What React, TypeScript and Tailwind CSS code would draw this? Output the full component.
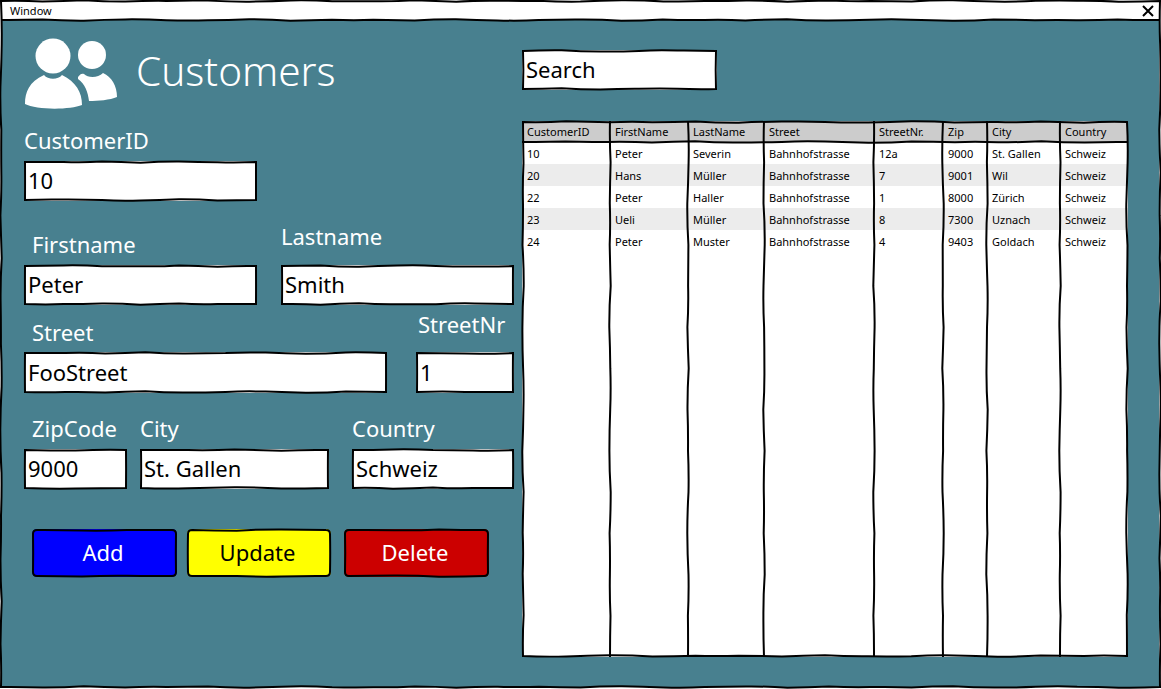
import type { ReactNode } from "react";

const FONT = "font-['Noto_Sans','Open_Sans',sans-serif]";

// hand-drawn look: a line with small seeded bumps along it
function wobbleLine(x1: number, y1: number, x2: number, y2: number, seed: number): string {
  const len = Math.hypot(x2 - x1, y2 - y1);
  const steps = Math.max(1, Math.round(len / 42));
  const nx = (y2 - y1) / (len || 1);
  const ny = (x2 - x1) / (len || 1);
  let d = "";
  let prevX = x1;
  let prevY = y1;
  for (let i = 1; i <= steps; i++) {
    const t = i / steps;
    const off = i === steps ? 0 : Math.sin(seed * 7.3 + i * 2.4) * 0.7;
    const x = x1 + (x2 - x1) * t + nx * off;
    const y = y1 + (y2 - y1) * t - ny * off;
    const bend = Math.sin(seed * 3.1 + i * 1.7) * 0.8;
    const cx = (prevX + x) / 2 + nx * bend;
    const cy = (prevY + y) / 2 - ny * bend;
    d += ` Q${cx.toFixed(1)} ${cy.toFixed(1)} ${x.toFixed(1)} ${y.toFixed(1)}`;
    prevX = x;
    prevY = y;
  }
  return d;
}

function wobbleRect(w: number, h: number, r: number, seed: number): string {
  const a = 1;
  const b = w - 1;
  const c = h - 1;
  return (
    `M${a + r} ${a}` +
    wobbleLine(a + r, a, b - r, a, seed) +
    (r ? ` Q${b} ${a} ${b} ${a + r}` : "") +
    wobbleLine(b, a + r, b, c - r, seed + 1) +
    (r ? ` Q${b} ${c} ${b - r} ${c}` : "") +
    wobbleLine(b - r, c, a + r, c, seed + 2) +
    (r ? ` Q${a} ${c} ${a} ${c - r}` : "") +
    wobbleLine(a, c - r, a, a + r, seed + 3) +
    (r ? ` Q${a} ${a} ${a + r} ${a}` : "") +
    " Z"
  );
}

function Outline({ w, h, r = 0, seed, children }: { w: number; h: number; r?: number; seed: number; children?: ReactNode }) {
  return (
    <svg
      className="pointer-events-none absolute inset-0 overflow-visible"
      width={w}
      height={h}
      viewBox={`0 0 ${w} ${h}`}
      fill="none"
      stroke="#000"
      strokeWidth="2"
    >
      <path d={wobbleRect(w, h, r, seed)} />
      {children}
    </svg>
  );
}

function InputBox({ value, w, h = 40, seed }: { value: string; w: number; h?: number; seed: number }) {
  return (
    <div
      className="relative flex items-center bg-white pb-[2px] pl-1 text-[22px] leading-none text-black"
      style={{ width: w, height: h }}
    >
      {value}
      <Outline w={w} h={h} seed={seed} />
    </div>
  );
}

function Field({
  label,
  value,
  w,
  h,
  seed,
  labelClass,
}: {
  label: string;
  value: string;
  w: number;
  h?: number;
  seed: number;
  labelClass: string;
}) {
  return (
    <div className="shrink-0" style={{ width: w }}>
      <div className={`h-6 whitespace-nowrap text-[22px] leading-[22px] text-white ${labelClass}`}>{label}</div>
      <InputBox value={value} w={w} h={h} seed={seed} />
    </div>
  );
}

function ActionButton({ label, w, bg, fg, seed }: { label: string; w: number; bg: string; fg: string; seed: number }) {
  return (
    <div
      className={`relative flex h-[48px] items-center justify-center rounded-[5px] pb-[2px] pr-[3px] text-[22px] ${bg} ${fg}`}
      style={{ width: w }}
    >
      {label}
      <Outline w={w} h={48} r={4} seed={seed} />
    </div>
  );
}

function CustomersIcon() {
  return (
    <svg className="ml-px" width="92" height="71" viewBox="25 38 92 71" fill="#fff">
      <circle cx="53" cy="56" r="17.5" />
      <circle cx="92" cy="55" r="14" />
      <path d="M25 104C25 92 29 82 44 75C48 80 58 80 62 75C76 82 82 92 82 105C70 110 36 110 25 104Z" />
      <path d="M78 77C80 74 82 73 84 74C88 78 98 78 103 73C112 77 117 86 117 97C110 100 98 101 89 101C88 92 85 84 78 79Z" />
    </svg>
  );
}

const COLUMNS = [
  { title: "CustomerID", width: 88 },
  { title: "FirstName", width: 78 },
  { title: "LastName", width: 76 },
  { title: "Street", width: 110 },
  { title: "StreetNr.", width: 69 },
  { title: "Zip", width: 44 },
  { title: "City", width: 73 },
  { title: "Country", width: 68 },
];

const ROWS = [
  ["10", "Peter", "Severin", "Bahnhofstrasse", "12a", "9000", "St. Gallen", "Schweiz"],
  ["20", "Hans", "Müller", "Bahnhofstrasse", "7", "9001", "Wil", "Schweiz"],
  ["22", "Peter", "Haller", "Bahnhofstrasse", "1", "8000", "Zürich", "Schweiz"],
  ["23", "Ueli", "Müller", "Bahnhofstrasse", "8", "7300", "Uznach", "Schweiz"],
  ["24", "Peter", "Muster", "Bahnhofstrasse", "4", "9403", "Goldach", "Schweiz"],
];

function CustomersTable() {
  let x = 0;
  const lines = COLUMNS.slice(0, -1).map((c, i) => {
    x += c.width;
    return <path key={c.title} d={`M${x} 0${wobbleLine(x, 0, x, 536, i + 11)}`} />;
  });
  return (
    <div className="relative mt-[31px] h-[536px] w-[606px] bg-white">
      <table className="w-full table-fixed border-collapse text-left text-[11px] leading-none text-black">
        <colgroup>
          {COLUMNS.map((c) => (
            <col key={c.title} style={{ width: c.width }} />
          ))}
        </colgroup>
        <thead>
          <tr className="h-[21px] bg-[#cccccc]">
            {COLUMNS.map((c) => (
              <th key={c.title} className="pl-[5px] font-normal whitespace-nowrap">
                {c.title}
              </th>
            ))}
          </tr>
        </thead>
        <tbody>
          {ROWS.map((row, i) => (
            <tr key={row[0]} className={`h-[22px] ${i % 2 === 1 ? "bg-[#ececec]" : "bg-white"}`}>
              {row.map((cell, j) => (
                <td key={j} className="pl-[5px] whitespace-nowrap">
                  {cell}
                </td>
              ))}
            </tr>
          ))}
        </tbody>
      </table>
      <Outline w={606} h={536} seed={5}>
        {lines}
        <path d={`M0 21${wobbleLine(0, 21, 606, 21, 23)}`} />
      </Outline>
    </div>
  );
}

export default function App() {
  return (
    <div className={`relative h-[689px] w-[1161px] overflow-hidden bg-white ${FONT}`}>
      <div className="relative mx-px mt-[2px] h-[685px] w-[1158px] bg-[#48808f]">
        {/* Title bar */}
        <div className="relative flex h-[18px] items-center justify-between bg-white pl-[9px] pr-[5px] text-[11px] text-black">
          <span>Window</span>
          <svg width="12" height="12" viewBox="0 0 12 12" stroke="#000" strokeWidth="2" fill="none">
            <path d="M1 1L11 11M11 1L1 11" />
          </svg>
          <svg className="absolute left-0 top-[17px] overflow-visible" width="1158" height="2" fill="none" stroke="#000" strokeWidth="2">
            <path d={`M0 1${wobbleLine(0, 1, 1158, 1, 31)}`} />
          </svg>
        </div>

        <div className="flex pl-[23px]">
          {/* Form */}
          <div className="w-[490px] shrink-0">
            <div className="mt-[18px] flex items-center gap-[19px]">
              <CustomersIcon />
              <span className="pb-1 text-[40.5px] font-light leading-none text-white">Customers</span>
            </div>
            <div className="mt-5">
              <Field label="CustomerID" value="10" w={233} seed={41} labelClass="mb-2" />
            </div>
            <div className="mt-6 flex items-end justify-between">
              <Field label="Firstname" value="Peter" w={233} seed={42} labelClass="mb-2 pl-2" />
              <Field label="Lastname" value="Smith" w={233} seed={43} labelClass="mb-4" />
            </div>
            <div className="mt-2 flex items-end justify-between">
              <Field label="Street" value="FooStreet" w={363} h={41} seed={44} labelClass="mb-[7px] pl-2" />
              <Field label="StreetNr" value="1" w={98} h={41} seed={45} labelClass="mb-[15px] pl-[2px]" />
            </div>
            <div className="mt-6 flex items-end">
              <Field label="ZipCode" value="9000" w={103} seed={46} labelClass="mb-2 pl-2" />
              <div className="ml-[13px]">
                <Field label="City" value="St. Gallen" w={189} seed={47} labelClass="mb-2" />
              </div>
              <div className="ml-[23px]">
                <Field label="Country" value="Schweiz" w={162} seed={48} labelClass="mb-2" />
              </div>
            </div>
            <div className="mt-10 flex pl-2">
              <ActionButton label="Add" w={145} bg="bg-[#0000ff]" fg="text-white" seed={51} />
              <div className="ml-[10px]">
                <ActionButton label="Update" w={144} bg="bg-[#ffff00]" fg="text-black" seed={52} />
              </div>
              <div className="ml-[13px]">
                <ActionButton label="Delete" w={145} bg="bg-[#cc0000]" fg="text-white" seed={53} />
              </div>
            </div>
          </div>

          {/* Search and list */}
          <div className="ml-2 pt-[30px]">
            <InputBox value="Search" w={195} seed={61} />
            <CustomersTable />
          </div>
        </div>
      </div>
      <Outline w={1161} h={688} seed={71} />
    </div>
  );
}
